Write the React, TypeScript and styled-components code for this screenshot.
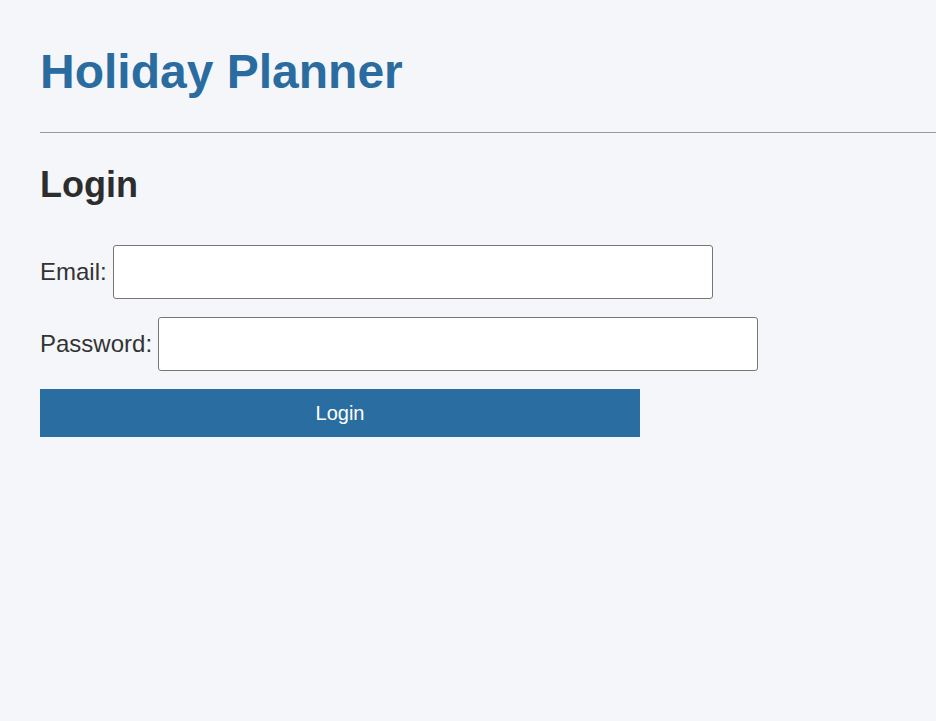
import React from "react";
import styled, { createGlobalStyle } from "styled-components";

const GlobalStyle = createGlobalStyle`
  html, body {
    margin: 0;
    padding: 0;
    background: #f4f6fa;
  }
  body {
    font-family: "Liberation Sans", Arial, sans-serif;
    color: #333;
  }
`;

const Page = styled.div`
  min-height: 100vh;
  box-sizing: border-box;
  padding: 44px 0 0 40px;
  background: #f4f6fa;
`;

const Title = styled.h1`
  margin: 0;
  font-size: 48px;
  line-height: 55px;
  font-weight: 700;
  color: #2a6c9f;
`;

const Divider = styled.hr`
  margin: 33px 0 0 0;
  border: 0;
  border-top: 1px solid #9a9a9a;
  height: 0;
`;

const Heading = styled.h2`
  margin: 31px 0 0 0;
  font-size: 36px;
  line-height: 41px;
  font-weight: 700;
  color: #2d2d2d;
`;

const Form = styled.form`
  display: flex;
  flex-direction: column;
  align-items: flex-start;
  gap: 18px;
  margin-top: 40px;
`;

const Row = styled.div`
  display: flex;
  align-items: center;
  gap: 6px;
`;

const Label = styled.label`
  font-size: 24px;
  color: #333;
`;

const Input = styled.input`
  box-sizing: border-box;
  width: 600px;
  height: 54px;
  border: 1px solid #767676;
  border-radius: 3px;
  background: #fff;
  font-size: 24px;
  font-family: inherit;
  padding: 0 8px;
  outline: none;
`;

const Button = styled.button`
  box-sizing: border-box;
  width: 600px;
  height: 48px;
  border: 0;
  background: #2a6ea1;
  color: #fff;
  font-family: "Liberation Sans", Arial, sans-serif;
  font-size: 20px;
  cursor: pointer;
`;

export default function App() {
  return (
    <>
      <GlobalStyle />
      <Page>
        <Title>Holiday Planner</Title>
        <Divider />
        <Heading>Login</Heading>
        <Form onSubmit={(e) => e.preventDefault()}>
          <Row>
            <Label htmlFor="email">Email:</Label>
            <Input id="email" type="email" />
          </Row>
          <Row>
            <Label htmlFor="password">Password:</Label>
            <Input id="password" type="password" />
          </Row>
          <Button type="submit">Login</Button>
        </Form>
      </Page>
    </>
  );
}
